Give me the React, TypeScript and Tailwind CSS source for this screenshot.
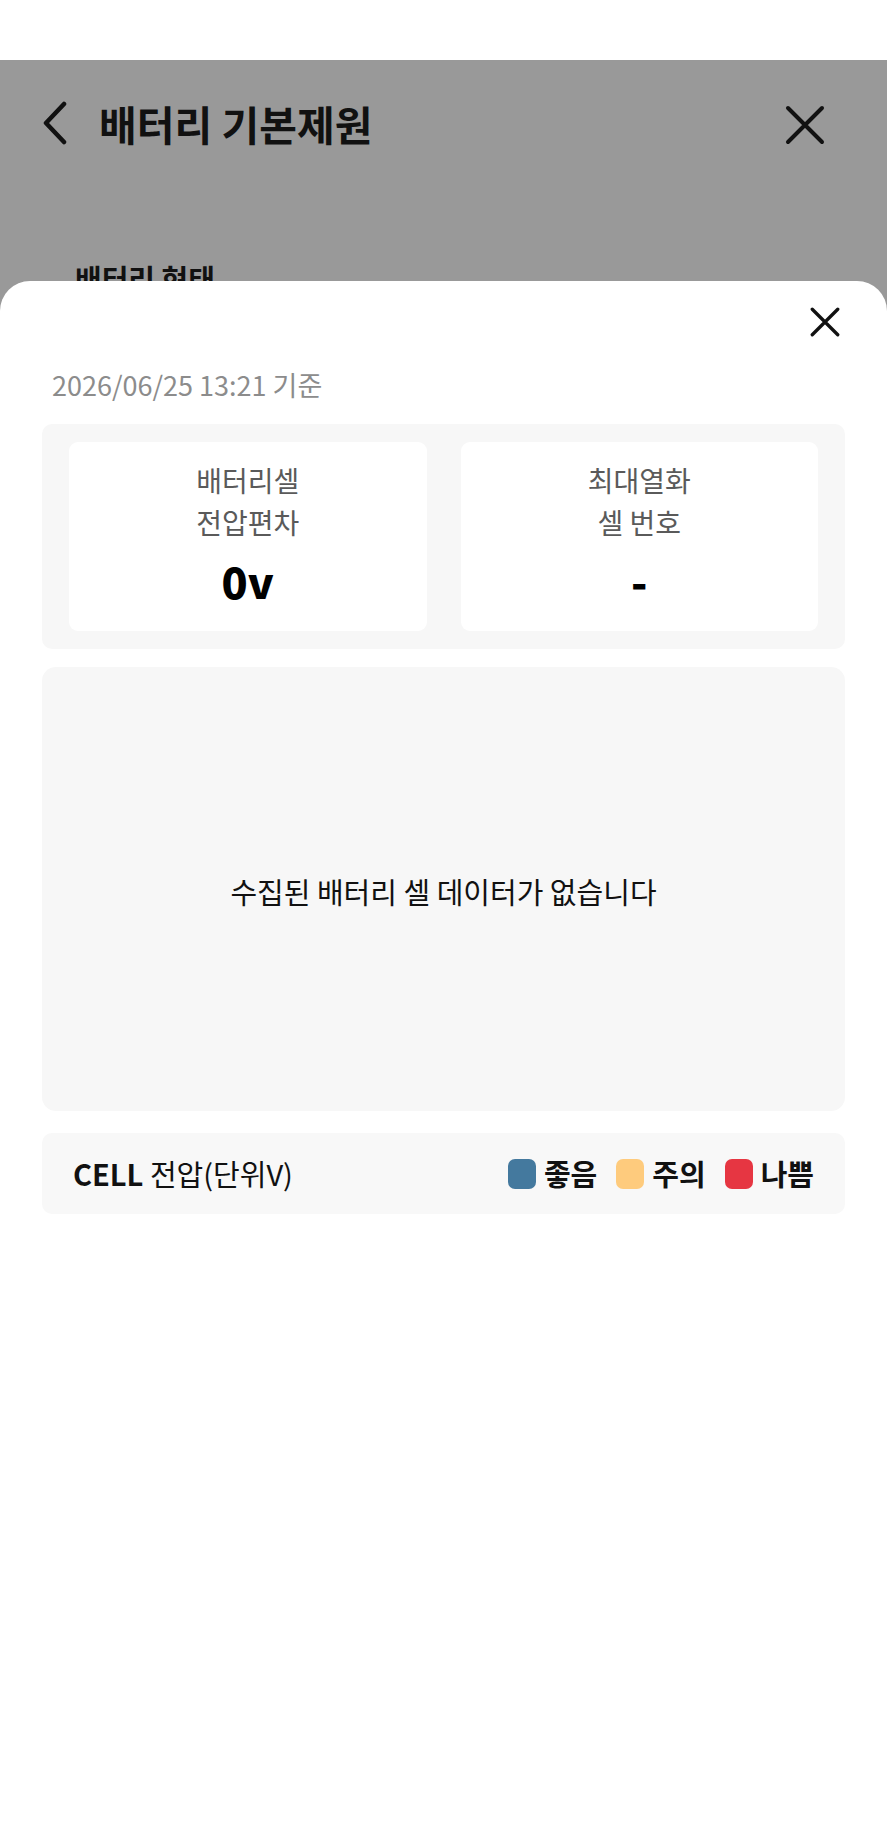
import React from "react";

const Chevron = () => (
  <svg width="26" height="44" viewBox="0 0 26 44" fill="none" className="shrink-0">
    <path d="M22 3 L4 22 L22 41" stroke="#111" strokeWidth="4.5" strokeLinecap="round" strokeLinejoin="round" />
  </svg>
);

const CloseIcon = ({ size, stroke }: { size: number; stroke: number }) => (
  <svg width={size} height={size} viewBox="0 0 40 40" fill="none">
    <path d="M3 3 L37 37 M37 3 L3 37" stroke="#111" strokeWidth={stroke} strokeLinecap="round" />
  </svg>
);

const App = () => {
  const stats = [
    { label: ["배터리셀", "전압편차"], value: "0v" },
    { label: ["최대열화", "셀 번호"], value: "-" },
  ];

  const legend = [
    { name: "좋음", color: "bg-[#44799e]" },
    { name: "주의", color: "bg-[#fecb7d]" },
    { name: "나쁨", color: "bg-[#e63642]" },
  ];

  return (
    <div className="min-h-[1823px] w-full flex flex-col bg-white font-['Noto_Sans_CJK_KR',sans-serif] text-[#111]">
      {/* status strip */}
      <div className="h-[60px] bg-white" />

      {/* dimmed page behind sheet */}
      <div className="flex-1 flex flex-col bg-[#999999]">
        <div className="flex items-center justify-between h-[130px] pl-[42px] pr-[62px]">
          <div className="flex items-center gap-[31px]">
            <div className="-mt-[4px]">
              <Chevron />
            </div>
            <h1 className="text-[41px] font-bold leading-none -mt-[4px]">배터리 기본제원</h1>
          </div>
          <CloseIcon size={40} stroke={4} />
        </div>
        <div className="h-[91px] overflow-hidden pl-[75px] pt-[68px]">
          <p className="text-[29px] font-bold leading-[40px]">배터리 현태</p>
        </div>

        {/* bottom sheet */}
        <div className="flex-1 bg-white rounded-t-[30px] px-[42px]">
          <div className="flex justify-end pt-[26px] pr-[5px]">
            <CloseIcon size={30} stroke={4.4} />
          </div>

          <p className="mt-[29px] pl-[10px] text-[27px] leading-[38px] text-[#8c8c8c]">2026/06/25 13:21 기준</p>

          <div className="mt-[20px] bg-[#f7f7f7] rounded-[10px] px-[27px] py-[18px] grid grid-cols-2 gap-[34px]">
            {stats.map((stat, index) => (
              <div key={index} className="h-[189px] bg-white rounded-[9px] flex flex-col items-center pt-[17px]">
                {stat.label.map((line) => (
                  <span key={line} className="text-[28px] leading-[42px] text-[#5a5a5a]">{line}</span>
                ))}
                <span className="mt-[14px] text-[43px] leading-[46px] font-extrabold text-black">{stat.value}</span>
              </div>
            ))}
          </div>

          <div className="mt-[18px] h-[444px] bg-[#f7f7f7] rounded-[14px] flex items-center justify-center">
            <p className="text-[29px] leading-[40px] text-[#111] pt-[4px]">수집된 배터리 셀 데이터가 없습니다</p>
          </div>

          <div className="mt-[22px] h-[81px] bg-[#f8f8f8] rounded-[10px] flex items-center justify-between pl-[31px] pr-[31px]">
            <p className="text-[29px] leading-none">
              <span className="font-bold">CELL</span> 전압(단위V)
            </p>
            <div className="flex items-center gap-[19px]">
              {legend.map((item) => (
                <div key={item.name} className="flex items-center gap-[8px]">
                  <span className={`w-[28px] h-[30px] rounded-[7px] ${item.color}`} />
                  <span className="text-[29px] font-bold leading-none">{item.name}</span>
                </div>
              ))}
            </div>
          </div>
        </div>
      </div>
    </div>
  );
};

export default App;
